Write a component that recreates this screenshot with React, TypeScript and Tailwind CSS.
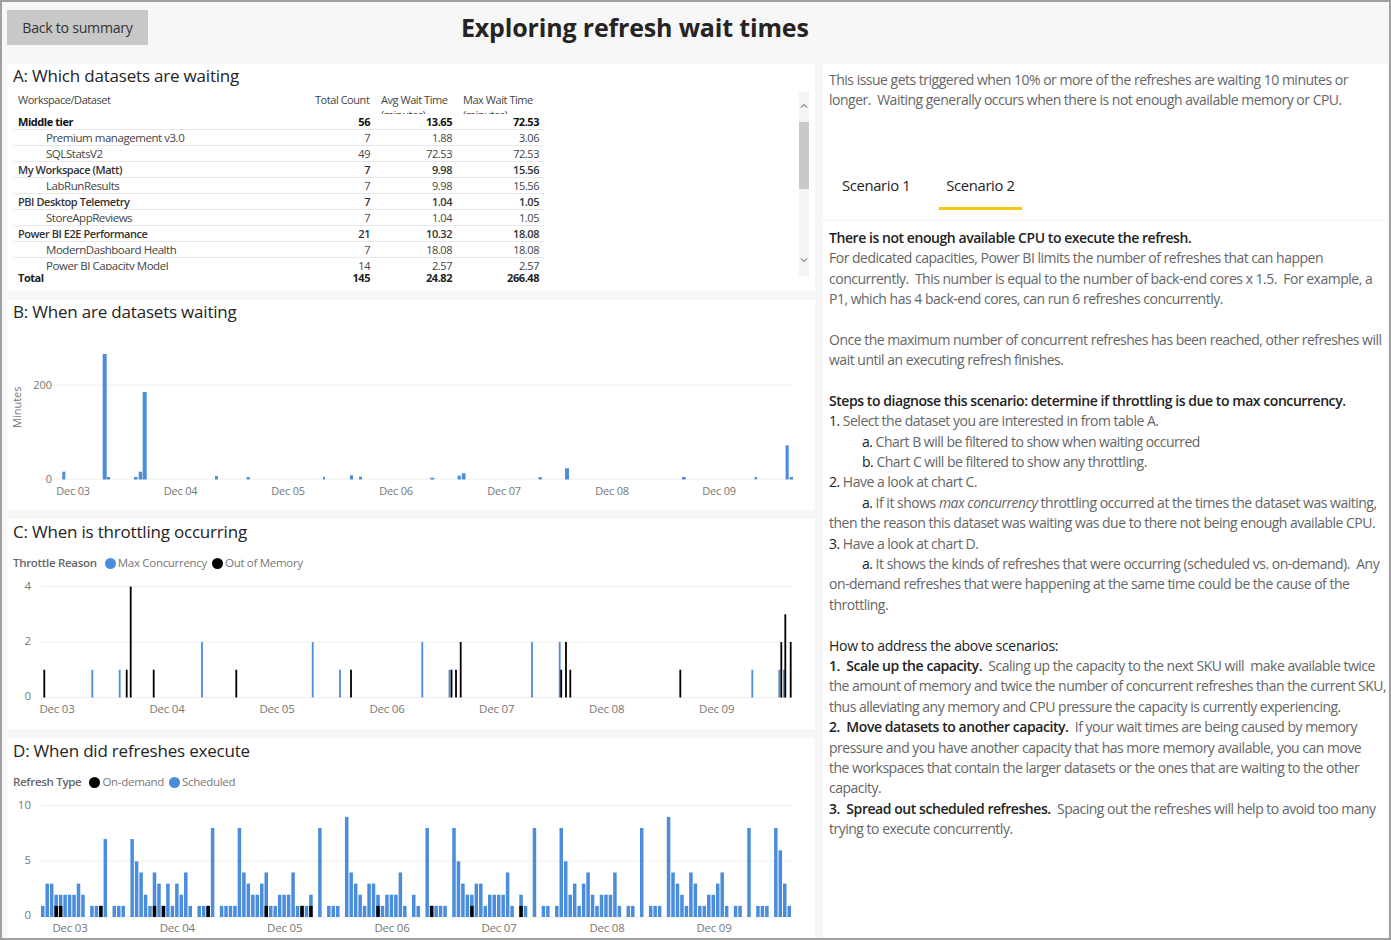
const FONT = "font-['Open_Sans','Noto_Sans',sans-serif]"
const BLUE = "#4a8ddc"

const tableRows = [
  { name: "Middle tier", count: "56", avg: "13.65", max: "72.53", level: 0, bold: true },
  { name: "Premium management v3.0", count: "7", avg: "1.88", max: "3.06", level: 1 },
  { name: "SQLStatsV2", count: "49", avg: "72.53", max: "72.53", level: 1 },
  { name: "My Workspace (Matt)", count: "7", avg: "9.98", max: "15.56", level: 0 },
  { name: "LabRunResults", count: "7", avg: "9.98", max: "15.56", level: 1 },
  { name: "PBI Desktop Telemetry", count: "7", avg: "1.04", max: "1.05", level: 0 },
  { name: "StoreAppReviews", count: "7", avg: "1.04", max: "1.05", level: 1 },
  { name: "Power BI E2E Performance", count: "21", avg: "10.32", max: "18.08", level: 0 },
  { name: "ModernDashboard Health", count: "7", avg: "18.08", max: "18.08", level: 1 },
  { name: "Power BI Capacity Model", count: "14", avg: "2.57", max: "2.57", level: 1 },
]

// [x, width, top] in page coordinates
const chartB = [
  [62.3, 3, 471.7], [102.7, 4, 354], [107, 3, 477], [134, 3.5, 477], [138.7, 3.5, 471.7], [142.7, 4, 392],
  [215, 3, 476], [246.7, 3, 477], [323, 2, 477], [350, 3, 475.3], [359, 3, 476.7], [430.4, 4, 477.7],
  [457.6, 3.2, 475.7], [461.8, 3.7, 473.3], [538.7, 3, 477], [565, 4, 468.3], [682, 3.6, 477],
  [754.7, 2.3, 477], [785.6, 3.1, 445.3], [789.7, 3.3, 477],
]

// [x, units, colour]
const chartC: [number, number, string][] = [
  [44.3, 1, "#000"], [92.3, 1, BLUE], [119.7, 1, BLUE], [126.7, 1, "#000"], [130.7, 4, "#000"], [153.7, 1, "#000"],
  [202, 2, BLUE], [236.3, 1, "#000"], [312.7, 2, BLUE], [340, 1, BLUE], [351, 1, "#000"], [422.3, 2, BLUE],
  [449.5, 1, BLUE], [451.5, 1, "#000"], [456, 1, "#000"], [460.7, 2, "#000"], [532, 2, BLUE], [559.7, 2, BLUE],
  [561.2, 1, "#000"], [566, 2, "#000"], [570.3, 1, "#000"], [680.3, 1, "#000"], [752.3, 1, BLUE], [779.3, 1, BLUE],
  [781.3, 2, "#000"], [784, 1, BLUE], [785.3, 3, "#000"], [790.7, 2, "#000"],
]

// hourly bars, 168 hours
const chartD = [
  1, 3, 3, 2, 2, 2, 2, 2, 3, 2, 0, 1, 1, 1, 7, 0, 1, 1, 1, 0, 7, 5, 4, 2, 1, 4, 3, 1, 3, 1, 3, 2, 4, 1, 0, 1, 1, 1, 8, 0,
  1, 1, 1, 1, 8, 4, 3, 2, 2, 3, 4, 1, 1, 2, 2, 2, 4, 1, 1, 1, 2, 0, 8, 0, 1, 1, 1, 0, 9, 4, 3, 2, 1, 3, 3, 2, 1, 2, 2, 2,
  4, 1, 0, 2, 1, 0, 8, 1, 1, 1, 1, 0, 8, 5, 3, 2, 2, 3, 3, 1, 2, 2, 2, 2, 4, 1, 0, 2, 1, 0, 8, 0, 1, 1, 0, 1, 8, 5, 2, 3,
  1, 3, 4, 2, 1, 2, 2, 2, 4, 1, 0, 1, 1, 0, 8, 0, 1, 1, 1, 0, 9, 4, 3, 2, 1, 4, 3, 1, 1, 2, 2, 3, 4, 1, 0, 1, 1, 0, 8, 0,
  1, 1, 1, 0, 8, 6, 3, 1,
]
const onDemand = [3, 4, 13, 25, 27, 37, 50, 58, 60, 75, 87, 96, 107]

function PanelTitle({ children }: { children: React.ReactNode }) {
  return <h2 className="text-[17px] leading-[24px] text-[#252423] tracking-[-0.2px]">{children}</h2>
}

function AxisLabels({ xs, y, size = 11.5 }: { xs: number[]; y: number; size?: number }) {
  const days = ["Dec 03", "Dec 04", "Dec 05", "Dec 06", "Dec 07", "Dec 08", "Dec 09"]
  return (
    <>
      {xs.map((x, i) => (
        <text key={days[i]} x={x} y={y} textAnchor="middle" fontSize={size} fill="#777" letterSpacing={-0.2}>
          {days[i]}
        </text>
      ))}
    </>
  )
}

function GridLine({ x1 = 41, x2 = 792, y }: { x1?: number; x2?: number; y: number }) {
  return <line x1={x1} x2={x2} y1={y} y2={y} stroke="#eeeeee" strokeWidth={1} />
}

function YLabel({ y, children }: { y: number; children: React.ReactNode }) {
  return (
    <text x={31} y={y + 4} textAnchor="end" fontSize={11.5} fill="#777">
      {children}
    </text>
  )
}

function DatasetsTable() {
  return (
    <div className="flex justify-between pl-[6px] pr-[6px] mt-[3px]">
      <div className="w-[531px] text-[11px] tracking-[-0.45px]">
        <div className="grid grid-cols-[297px_65px_82px_87px] h-[22px] leading-[15px] overflow-hidden text-[#444]">
          <div className="pl-[5px]">Workspace/Dataset</div>
          <div className="pl-[5px]">Total Count</div>
          <div className="pl-[6px]">Avg Wait Time (minutes)</div>
          <div className="pl-[6px]">Max Wait Time (minutes)</div>
        </div>
        {/* last row is cut by the scroll area */}
        <div className="mb-[2px] h-[156px] overflow-hidden">
          {tableRows.map((row) => (
            <div
              key={row.name}
              className={`grid grid-cols-[297px_65px_82px_87px] h-[16px] leading-[15px] border-b border-[#e8e8e8] ${
                row.bold ? "font-bold text-[#111]" : row.level === 0 ? "font-semibold text-[#333]" : "text-[#444]"
              }`}
            >
              <div className={row.level ? "pl-[33px] text-[11.5px]" : "pl-[5px]"}>{row.name}</div>
              <div className="pr-[5px] text-right">{row.count}</div>
              <div className="pr-[5px] text-right">{row.avg}</div>
              <div className="pr-[5px] text-right">{row.max}</div>
            </div>
          ))}
        </div>
        <div className="grid grid-cols-[297px_65px_82px_87px] h-[14px] leading-[12px] font-bold text-[#222]">
          <div className="pl-[5px]">Total</div>
          <div className="pr-[5px] text-right">145</div>
          <div className="pr-[5px] text-right">24.82</div>
          <div className="pr-[5px] text-right">266.48</div>
        </div>
      </div>
      <div className="flex h-[184px] w-[10px] flex-col items-center bg-[#f4f4f4]">
        <svg width="10" height="30" viewBox="0 0 10 30" className="shrink-0">
          <path d="M2 15.5 5 12.5 8 15.5" fill="none" stroke="#444" strokeWidth="1" />
        </svg>
        <div className="h-[67px] w-full bg-[#c9c9c9]" />
        <svg width="10" height="87" viewBox="0 0 10 87" className="shrink-0">
          <path d="M2 69.5 5 72.5 8 69.5" fill="none" stroke="#444" strokeWidth="1" />
        </svg>
      </div>
    </div>
  )
}

function WaitChart() {
  return (
    <svg width="808" height="170" viewBox="7 338 808 170" className={`block ${FONT}`}>
      <GridLine y={385} />
      <GridLine y={479} />
      <text x={52} y={389} textAnchor="end" fontSize={11} fill="#777">
        200
      </text>
      <text x={52} y={483} textAnchor="end" fontSize={11} fill="#777">
        0
      </text>
      <text transform="translate(21 428) rotate(-90)" fontSize={11} fill="#777">
        Minutes
      </text>
      {chartB.map(([x, w, top]) => (
        <rect key={x} x={x} y={top} width={w} height={479.5 - top} fill={BLUE} />
      ))}
      <AxisLabels xs={[73, 180.5, 288, 396, 504, 612, 719]} y={495} size={11} />
    </svg>
  )
}

function ThrottleChart() {
  return (
    <svg width="808" height="150" viewBox="7 577 808 150" className={`block ${FONT}`}>
      <GridLine y={586.5} />
      <GridLine y={642} />
      <GridLine y={697.5} />
      <YLabel y={586}>4</YLabel>
      <YLabel y={641}>2</YLabel>
      <YLabel y={696}>0</YLabel>
      {chartC.map(([x, units, colour]) => (
        <rect key={x} x={x - 0.9} y={697.5 - units * 27.75} width={1.8} height={units * 27.75} fill={colour} />
      ))}
      <AxisLabels xs={[57, 167, 277, 387, 496.7, 606.7, 716.7]} y={713} />
    </svg>
  )
}

function RefreshChart() {
  return (
    <svg width="808" height="143" viewBox="7 795 808 143" className={`block ${FONT}`}>
      <GridLine y={805.5} />
      <GridLine y={861} />
      <GridLine y={917} />
      <YLabel y={805}>10</YLabel>
      <YLabel y={860}>5</YLabel>
      <YLabel y={915}>0</YLabel>
      {chartD.map((units, i) =>
        units > 0 ? (
          <rect key={i} x={41 + i * 4.47} y={917 - units * 11.13} width={3.5} height={units * 11.13} fill={BLUE} />
        ) : null,
      )}
      {onDemand.map((i) => (
        <rect key={i} x={41 + i * 4.47} y={917 - 11.13} width={3.5} height={11.13} fill="#000" />
      ))}
      <AxisLabels xs={[70, 177.3, 284.7, 392, 499, 607, 714]} y={932} />
    </svg>
  )
}

function Legend({ title, items }: { title: string; items: [string, string][] }) {
  return (
    <div className="mt-[11px] flex h-[16px] items-center pl-[6px] text-[11.5px] tracking-[-0.3px] text-[#777]">
      <span className="mr-[8px] font-semibold text-[#666]">{title}</span>
      {items.map(([label, colour]) => (
        <span key={label} className="mr-[5px] flex items-center gap-[2px]">
          <span className="h-[11px] w-[11px] rounded-full" style={{ backgroundColor: colour }} />
          {label}
        </span>
      ))}
    </div>
  )
}

function Line({ children, indent }: { children?: React.ReactNode; indent?: boolean }) {
  return <div className={`h-[20.4px] whitespace-pre ${indent ? "pl-[33px]" : ""}`}>{children}</div>
}

function B({ children }: { children: React.ReactNode }) {
  return <span className="font-semibold text-[#222] tracking-[-0.44px]">{children}</span>
}

function N({ children }: { children: React.ReactNode }) {
  return <span className="text-[#222]">{children}</span>
}

function ScenarioText() {
  return (
    <div className="pl-[6px] pt-[7px]">
      <Line><B>There is not enough available CPU to execute the refresh.</B></Line>
      <Line>For dedicated capacities, Power BI limits the number of refreshes that can happen</Line>
      <Line>concurrently.  This number is equal to the number of back-end cores x 1.5.  For example, a</Line>
      <Line>P1, which has 4 back-end cores, can run 6 refreshes concurrently.</Line>
      <Line />
      <Line>Once the maximum number of concurrent refreshes has been reached, other refreshes will</Line>
      <Line>wait until an executing refresh finishes.</Line>
      <Line />
      <Line><B>Steps to diagnose this scenario: determine if throttling is due to max concurrency.</B></Line>
      <Line><N>1.</N> Select the dataset you are interested in from table A.</Line>
      <Line indent><N>a.</N> Chart B will be filtered to show when waiting occurred</Line>
      <Line indent><N>b.</N> Chart C will be filtered to show any throttling.</Line>
      <Line><N>2.</N> Have a look at chart C.</Line>
      <Line indent><N>a.</N> If it shows <em>max concurrency</em> throttling occurred at the times the dataset was waiting,</Line>
      <Line>then the reason this dataset was waiting was due to there not being enough available CPU.</Line>
      <Line><N>3.</N> Have a look at chart D.</Line>
      <Line indent><N>a.</N> It shows the kinds of refreshes that were occurring (scheduled vs. on-demand).  Any</Line>
      <Line>on-demand refreshes that were happening at the same time could be the cause of the</Line>
      <Line>throttling.</Line>
      <Line />
      <Line><span className="font-medium text-[#222] tracking-[-0.3px]">How to address the above scenarios:</span></Line>
      <Line><B>1.  Scale up the capacity.</B>  Scaling up the capacity to the next SKU will  make available twice</Line>
      <Line>the amount of memory and twice the number of concurrent refreshes than the current SKU,</Line>
      <Line>thus alleviating any memory and CPU pressure the capacity is currently experiencing.</Line>
      <Line><B>2.  Move datasets to another capacity.</B>  If your wait times are being caused by memory</Line>
      <Line>pressure and you have another capacity that has more memory available, you can move</Line>
      <Line>the workspaces that contain the larger datasets or the ones that are waiting to the other</Line>
      <Line>capacity.</Line>
      <Line><B>3.  Spread out scheduled refreshes.</B>  Spacing out the refreshes will help to avoid too many</Line>
      <Line>trying to execute concurrently.</Line>
    </div>
  )
}

export default function App() {
  return (
    <div className={`${FONT} flex h-[940px] w-[1391px] flex-col overflow-hidden border-2 border-[#a0a0a0] bg-[#f7f7f7]`}>
      {/* Header */}
      <header className="relative h-[62px] shrink-0 pl-[5px] pt-[8px]">
        <button className="h-[35px] w-[141px] bg-[#c8c8c8] text-[14.2px] tracking-[-0.3px] text-[#333]">
          Back to summary
        </button>
        <h1 className="absolute left-[459px] top-[7px] whitespace-nowrap text-[25px] leading-[36px] font-bold tracking-[-0.17px] text-[#252423]">
          Exploring refresh wait times
        </h1>
      </header>

      <main className="flex min-h-0 flex-1 gap-[8px] pl-[5px]">
        {/* Charts column */}
        <div className="flex w-[808px] shrink-0 flex-col gap-[9px]">
          <section className="h-[227px] bg-white">
            <div className="pl-[6px]"><PanelTitle>A: Which datasets are waiting</PanelTitle></div>
            <div className="pt-[1px]"><DatasetsTable /></div>
          </section>
          <section className="h-[210px] bg-white">
            <div className="pl-[6px]"><PanelTitle>B: When are datasets waiting</PanelTitle></div>
            <div className="mt-[14px]"><WaitChart /></div>
          </section>
          <section className="h-[210px] bg-white">
            <div className="pl-[6px] pt-[1px]"><PanelTitle>C: When is throttling occurring</PanelTitle></div>
            <Legend title="Throttle Reason" items={[["Max Concurrency", BLUE], ["Out of Memory", "#000"]]} />
            <div className="mt-[6px]"><ThrottleChart /></div>
          </section>
          <section className="h-[200px] bg-white">
            <div className="pl-[6px] pt-[1px]"><PanelTitle>D: When did refreshes execute</PanelTitle></div>
            <Legend title="Refresh Type" items={[["On-demand", "#000"], ["Scheduled", BLUE]]} />
            <div className="mt-[5px]"><RefreshChart /></div>
          </section>
        </div>

        {/* Description column */}
        <section className="w-[565px] bg-white text-[14px] leading-[20.4px] tracking-[-0.5px] text-[#666]">
          <div className="pl-[6px] pt-[6px]">
            <Line>This issue gets triggered when 10% or more of the refreshes are waiting 10 minutes or</Line>
            <Line>longer.  Waiting generally occurs when there is not enough available memory or CPU.</Line>
          </div>
          <div className="mt-[54px] flex h-[56px] border-b border-[#f4f4f4] pl-[19px] text-[14.8px] tracking-[-0.34px] text-[#252423]">
            <div className="w-[97px] pt-[10px]">Scenario 1</div>
            <div className="h-[45px] w-[83px] border-b-[3px] border-[#f2c811] pt-[10px] text-center">Scenario 2</div>
          </div>
          <ScenarioText />
        </section>
      </main>
    </div>
  )
}
